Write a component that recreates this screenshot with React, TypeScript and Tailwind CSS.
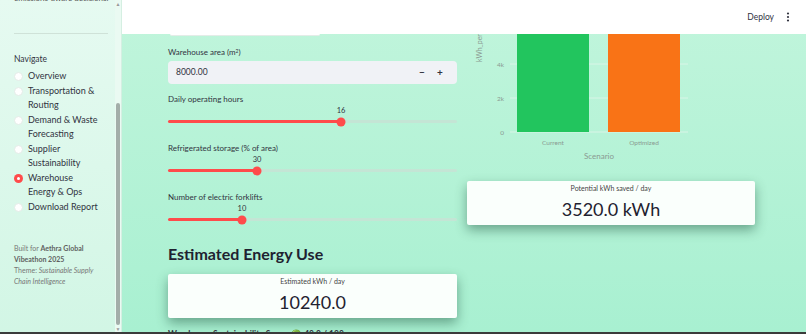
import React from "react";

const font = { fontFamily: "Lato, 'Noto Sans', sans-serif" };

const navItems = [
  { lines: ["Overview"], active: false },
  { lines: ["Transportation &", "Routing"], active: false },
  { lines: ["Demand & Waste", "Forecasting"], active: false },
  { lines: ["Supplier", "Sustainability"], active: false },
  { lines: ["Warehouse", "Energy & Ops"], active: true },
  { lines: ["Download Report"], active: false },
];

const sliders = [
  { label: "Daily operating hours", value: 16, pct: 59.9 },
  { label: "Refrigerated storage (% of area)", value: 30, pct: 30.8 },
  { label: "Number of electric forklifts", value: 10, pct: 25.6 },
];

function Radio({ active }: { active: boolean }) {
  if (active) {
    return (
      <span className="mt-[2.5px] flex h-[9px] w-[9px] shrink-0 items-center justify-center rounded-full bg-[#ff4b4b]">
        <span className="h-[3px] w-[3px] rounded-full bg-white" />
      </span>
    );
  }
  return <span className="mt-[2.5px] h-[9px] w-[9px] shrink-0 rounded-full border border-[#e3ece7] bg-white" />;
}

function Sidebar() {
  return (
    <aside className="relative flex w-[122px] shrink-0 overflow-hidden border-r border-[#d5efe2] bg-gradient-to-b from-[#e6faf1] to-[#d2f6e5]">
      <div className="flex-1 pl-[14px] pr-[4px]">
        <p className="-mt-[7px] whitespace-nowrap text-[8px] leading-[10px] text-[#555]">
          emissions-aware decisions.
        </p>
        <div className="mt-[30px] h-px w-[94px] bg-[#cfe2d8]" />
        <p className="mt-[19px] text-[8.5px] leading-[12px] text-[#31333f]">Navigate</p>
        <ul className="mt-[4px] flex flex-col gap-px">
          {navItems.map((item) => (
            <li key={item.lines[0]} className="flex gap-[5px]">
              <Radio active={item.active} />
              <span className="text-[9px] leading-[14px] text-[#31333f]">
                {item.lines.map((l) => (
                  <span key={l} className="block">
                    {l}
                  </span>
                ))}
              </span>
            </li>
          ))}
        </ul>
        <div className="mt-[29px] w-[90px] text-[7px] leading-[11px] text-[#777]">
          <p>
            Built for <b className="text-[#5f5f5f]">Aethra Global</b>
          </p>
          <p>
            <b className="text-[#5f5f5f]">Vibeathon 2025</b>
          </p>
          <p>
            Theme: <i>Sustainable Supply</i>
          </p>
          <p>
            <i>Chain Intelligence</i>
          </p>
        </div>
      </div>
      {/* scrollbar */}
      <div className="flex w-[6px] shrink-0 flex-col items-center bg-[#eafaf2]">
        <span className="mt-[1px] text-[5px] leading-[6px] text-[#999]">▲</span>
        <div className="mt-[96px] h-[222px] w-[4px] rounded-full bg-[#a3aea9]" />
        <span className="mt-[1px] text-[5px] leading-[6px] text-[#999]">▼</span>
      </div>
    </aside>
  );
}

function Header() {
  return (
    <header className="flex h-[34px] shrink-0 items-center justify-end gap-[12px] bg-white pr-[16px]">
      <span className="text-[8.5px] text-[#31333f]">Deploy</span>
      <svg width="4" height="10" viewBox="0 0 4 10" aria-hidden="true">
        <circle cx="2" cy="1.5" r="1.1" fill="#31333f" />
        <circle cx="2" cy="5" r="1.1" fill="#31333f" />
        <circle cx="2" cy="8.5" r="1.1" fill="#31333f" />
      </svg>
    </header>
  );
}

function Slider({ label, value, pct }: { label: string; value: number; pct: number }) {
  return (
    <div className="mb-[10px] mt-[9px] shrink-0">
      <p className="text-[8px] leading-[12px] text-[#31333f]">{label}</p>
      <div className="relative h-[12px]">
        <span
          className="absolute top-0 -translate-x-1/2 text-[7.5px] leading-[12px] text-[#31333f]"
          style={{ left: `${pct}%` }}
        >
          {value}
        </span>
      </div>
      <div className="relative mt-[3px] h-[3px] rounded-full bg-[#c4e5d5]">
        <div className="h-full rounded-full bg-[#ff4b4b]" style={{ width: `${pct}%` }} />
        <span
          className="absolute top-1/2 h-[9px] w-[9px] -translate-x-1/2 -translate-y-1/2 rounded-full bg-[#ff4b4b]"
          style={{ left: `${pct}%` }}
        />
      </div>
    </div>
  );
}

function MetricCard({ label, value }: { label: string; value: string }) {
  return (
    <div className="flex h-[44px] flex-col items-center rounded-[2px] bg-[#fafffc] pt-[2px] shadow-[0_5px_12px_rgba(20,70,50,0.45)]">
      <span className="text-[7px] leading-[10px] text-[#444]">{label}</span>
      <span className="mt-[5px] text-[18px] leading-[22px] text-[#1f2230]">{value}</span>
    </div>
  );
}

function Chart() {
  return (
    <svg width="288" height="131" viewBox="0 0 288 131" className="block shrink-0" aria-hidden="true">
      {[30, 64, 98].map((y) => (
        <line key={y} x1="43" x2="221" y1={y} y2={y} stroke="#d9f5e7" strokeWidth="1" />
      ))}
      <rect x="50" y="0" width="72" height="98" fill="#22c55e" />
      <rect x="141" y="0" width="72" height="98" fill="#f97316" />
      <g fontSize="6.5" fill="#8a9a92" textAnchor="end" fontFamily="Lato, sans-serif">
        <text x="37" y="32.5">4k</text>
        <text x="37" y="66.5">2k</text>
        <text x="37" y="100.5">0</text>
      </g>
      <g fontSize="6.5" fill="#8a9a92" textAnchor="middle" fontFamily="Lato, sans-serif">
        <text x="86" y="111">Current</text>
        <text x="177" y="111">Optimized</text>
        <text x="132" y="125" fontSize="8">Scenario</text>
      </g>
      <text
        x="0"
        y="0"
        fontSize="7"
        fill="#8a9a92"
        fontFamily="Lato, sans-serif"
        transform="translate(15 28) rotate(-90)"
      >
        kWh_per_day
      </text>
    </svg>
  );
}

export default function App() {
  return (
    <div className="flex h-[334px] w-[806px] flex-col overflow-hidden" style={font}>
      <div className="flex h-[332px] shrink-0">
        <Sidebar />
        <main className="flex min-w-0 flex-1 flex-col bg-gradient-to-b from-[#c1f5dc] to-[#a8f0d1]">
          <Header />
          <div className="flex min-h-0 flex-1 gap-[10px] overflow-hidden pl-[46px] pr-[51px]">
            {/* left column */}
            <div className="flex w-[289px] shrink-0 flex-col">
              <div className="ml-[2px] h-[2px] w-[150px] shrink-0 rounded-b-[3px] border-b border-[#e4ece8] bg-white" />
              <p className="mt-[10px] shrink-0 text-[8px] leading-[12px] text-[#31333f]">
                Warehouse area (m<sup className="text-[5px]">2</sup>)
              </p>
              <div className="mt-[3px] flex h-[23px] shrink-0 items-center rounded-[4px] bg-[#f0f2f6] pl-[8px] pr-[8px]">
                <span className="flex-1 text-[8.5px] text-[#31333f]">8000.00</span>
                <span className="w-[18px] text-center text-[10px] font-bold text-[#31333f]">−</span>
                <span className="w-[18px] text-center text-[10px] font-bold text-[#31333f]">+</span>
              </div>
              {sliders.map((s) => (
                <Slider key={s.label} {...s} />
              ))}
              <h2 className="mt-[13px] shrink-0 text-[16px] font-bold leading-[20px] text-[#1f2230]">
                Estimated Energy Use
              </h2>
              <div className="mt-[10px] shrink-0">
                <MetricCard label="Estimated kWh / day" value="10240.0" />
              </div>
              <p className="mt-[10px] shrink-0 whitespace-nowrap text-[8.5px] font-bold leading-[12px] text-[#31333f]">
                Warehouse Sustainability Score: 🟢 40.0 / 100
              </p>
            </div>
            {/* right column */}
            <div className="flex w-[288px] shrink-0 flex-col">
              <Chart />
              <div className="mt-[16px] shrink-0">
                <MetricCard label="Potential kWh saved / day" value="3520.0 kWh" />
              </div>
            </div>
          </div>
        </main>
      </div>
      <div className="h-[2px] shrink-0 bg-[#3b3b3b]" />
    </div>
  );
}
